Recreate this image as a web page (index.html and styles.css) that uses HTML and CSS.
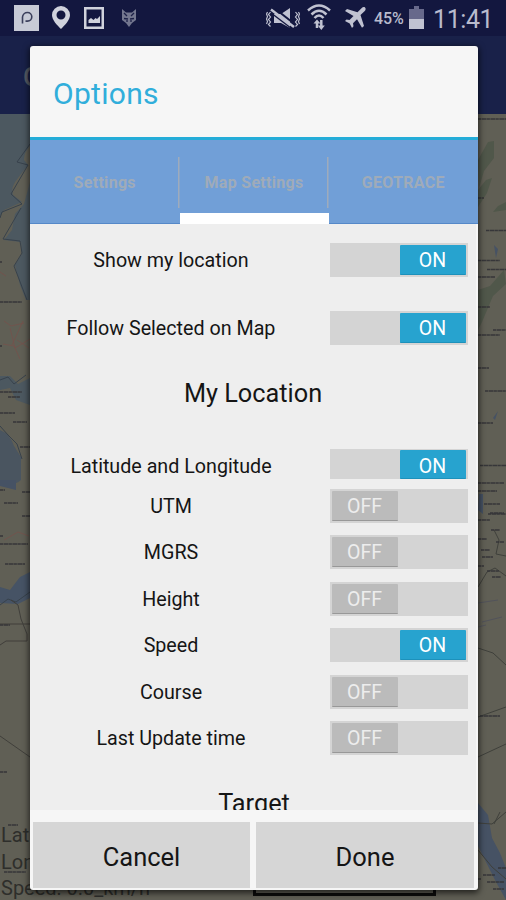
FILE: index.html
```html
<!DOCTYPE html>
<html lang="en">
<head>
<meta charset="utf-8">
<title>Options</title>
<link rel="stylesheet" href="styles.css">
</head>
<body>
<div class="screen">
  <header class="statusbar">
    <div class="status-left">
      <svg class="ic-p" width="25" height="26" viewBox="0 0 25 26"><rect width="25" height="26" fill="#c7cad6"/><path d="M8.500 18.500V12a5 5 0 0 1 5-4.500a4.300 4.300 0 1 1 0 8.600h-2" fill="none" stroke="#3b3f5c" stroke-width="1.600"/></svg>
      <svg class="ic-pin" width="18" height="23" viewBox="0 0 18 23"><path fill-rule="evenodd" d="M9 0a9 9 0 0 1 9 9c0 5-5 10-9 14C5 19 0 14 0 9a9 9 0 0 1 9-9zm0 4.500a4.500 4.500 0 1 0 0 9a4.500 4.500 0 0 0 0-9z" fill="#d0d2dc"/></svg>
      <svg class="ic-img" width="20" height="22" viewBox="0 0 20 22"><rect x="1.250" y="1.250" width="17.500" height="19.500" fill="none" stroke="#d0d2dc" stroke-width="2.500"/><path d="M4.500 16v-3l2.500-2 2.500 2 2-2 1.500 1 3-3v7z" fill="#d0d2dc"/></svg>
      <svg class="ic-fox" width="14" height="18" viewBox="0 0 14 18"><path d="M0 0l4 3.500h6L14 0v11l-4 3-3 4-3-4-4-3z" fill="#74778f"/><path d="M2 4l3 3M12 4l-3 3M2 9.500l4 .5M12 9.500l-4 .5M5 13v-2M9 13v-2" stroke="#1c2047" stroke-width="1.300"/></svg>
    </div>
    <div class="status-right">
      <svg class="ic-mute" width="34" height="21" viewBox="0 0 34 21"><path d="M8 6h7l9-6v20l-9-5H8z" fill="#c0c2d1"/><path d="M7.500-.5l23 18" stroke="#13173f" stroke-width="2"/><path d="M5 1.500l23 17.500" stroke="#c0c2d1" stroke-width="2.400"/><path d="M3.500 3.800l23 17.500" stroke="#13173f" stroke-width="1.300"/><path d="M4.500 4l-2 2.500 2 2.500-2 2.500 2 2.500-2 2.500 2 2M1.500 4l-1 2 1 2.500-1 2.500 1 2.500-1 2.500M29.500 4l2 2.500-2 2.500 2 2.500-2 2.500 2 2.500-2 2M32.500 4l1 2-1 2.500 1 2.500-1 2.500 1 2.500" fill="none" stroke="#c0c2d1" stroke-width="1.200"/></svg>
      <svg class="ic-wifi" width="24" height="26" viewBox="0 0 24 26"><path d="M1 6.500Q12-3.500 23 6.500M4.500 10.500Q12 3 19.500 10.500M7.500 14Q12 9 16.500 14" fill="none" stroke="#c0c2d1" stroke-width="2.500"/><path d="M10 24v-6M14.300 16v6" stroke="#c0c2d1" stroke-width="2.500"/><path d="M6.500 19.500l3.500-4 3.500 4zM10.800 21.500h7L14.300 26z" fill="#c0c2d1"/></svg>
      <svg class="ic-plane" width="21" height="21" viewBox="0 0 21 21"><path d="M20 .5c1.200 1 .6 2.700-.5 3.800L15.500 8l3.500 11-2 1.800-5-8.500-4 4 .5 3L7 21l-2.300-4.500L0 14l1.500-1.500 3 .5 4-4L0 4l2-2 10.500 3.200L16.500 1.200C17.700.1 19.200-.2 20 .5z" fill="#c0c2d1"/></svg>
      <span class="percent">45%</span>
      <svg class="ic-bat" width="15" height="23" viewBox="0 0 15 23"><path d="M5 0h5v3h5v10H0V3h5z" fill="#67698b"/><path d="M0 13h15v10H0z" fill="#c0c2d1"/></svg>
      <span class="clock">11:41</span>
    </div>
  </header>
  <div class="appbar">G</div>
  <main class="map">
    <svg class="map-art" width="506" height="786" viewBox="0 114 506 786">
      <rect x="0" y="114" width="506" height="786" fill="#605f55"/>
      <g fill="#4c5860">
        <path d="M0 114H30V146Q24 152 24 160L28 165 18 178Q10 187 13 195L22 202 4 210 0 216z"/>
        <path d="M30 182L24 204 15 214 12 230 4 240 21 242 22 254 15 265 20 285 26 300H30z"/>
        <path d="M0 376L10 376 18 384 30 378V405L16 400 10 388 0 390z"/>
      </g>
      <path d="M0 430Q10 434 14 446L21 457V480Q15 486 0 484z" fill="#4a5560"/>
      <path d="M0 587L10 590 20 577 30 572V598L18 604 0 603z" fill="#465365"/>
      <g fill="none" stroke="#38424c" stroke-width="1">
        <path d="M30 144L17 162 28 165 11 194 22 204 2 212 0 218M21 208L3 239 20 241 22 253 14 266 27 300M0 380L8 377 14 384 26 375M0 426l8 9 9 9 5 15M0 605l8-6 8 3 14-10"/>
        <path d="M11 600l7 5 3 14 6 15v7H6l-6 4M0 736l30 21M0 624h30" stroke="#403f3b"/>
      </g>
      <g fill="none" stroke="#78504a" stroke-width="1" opacity=".7">
        <path d="M4 321l7 5 13-3M10 328l5 20 15-9M3 344l11 2 6 13M12 345l11-24M0 272l6 4M17 340l12 8M4 540l14-8 11 4"/>
      </g>
      <g fill="#50574a">
        <path d="M478 160L488 142 494 141 494 158 484 171 479 188z"/>
        <path d="M478 190l8-10 6-2-5 15-9 14zM498 206l8-4v8l-13 2zM478 290l12-4 14-16 2 14-13 12-11 26-4 8z"/>
      </g>
      <g fill="#465264">
        <path d="M478 803L488 815 492 838 500 853 506 868V900L496 882 478 846zM479 494h4v20l-5-4zM493 418l5-7-3 9zM494 245l4 4-2 9zM0 480h16v10L0 486z"/>
      </g>
      <g fill="none" stroke="#3f403b" stroke-width="1">
        <path d="M478 648l15 5 13 12M478 717l28-10M478 757l28-13M478 587l9-15 8-4 11 8M500 812l-6 12M478 823l14 1 14-12M478 850l14 17 14 12M494 530l5 10-3 14 10 2"/>
        <path d="M478 603l20-3M482 622l20-5M478 627l8-2" stroke="#52535a"/>
      </g>
      <g fill="none" stroke="#363639" stroke-width="1.700" stroke-dasharray="3 .5 5 .4">
        <path d="M478 119h28M478 198h6M486 230.500h20M478 260.500h22M487 269.500h19M478 277h17M478 307h12M493 330h13M478 335h22M478 368h11M485 391h21M478 423h15M480 465.500h26M478 483h26M478 491h19"/>
        <path d="M484 504h16M488 514h18M490 513h14M478 520h12M491 530h9M496 542h8M478 539h9M481 550h9M482 557h11M478 566h6M487 571h12M492 577h9M480 716h20M498 868h8M483 875h12M487 882h17M493 889h11M478 879h3"/>
        <path d="M0 262h2M0 302h22M0 346h2M0 392h22M8 397h12M0 413h15M13 422h14M20 447h10M0 490h5M4 503h14M22 492h8M22 516h8M0 536h3M0 544h28M5 564h20M0 625h10M0 772h7M8 825h10M4 872h22"/>
      </g>
    </svg>
    <div class="readout"><div>Lat:</div><div>Lon:</div><div>Speed: 0.0_km/h</div></div>
    <div class="scale"></div>
  </main>

  <section class="dialog">
    <h1 class="title">Options</h1>
    <nav class="tabs">
      <div class="tab"><span>Settings</span></div>
      <div class="tab active"><span>Map Settings</span></div>
      <div class="tab"><span>GEOTRACE</span></div>
    </nav>
    <div class="options">
      <div class="row tall"><span class="label">Show my location</span><div class="switch on"><b>ON</b></div></div>
      <div class="row tall"><span class="label">Follow Selected on Map</span><div class="switch on"><b>ON</b></div></div>
      <h2 class="heading">My Location</h2>
      <div class="row first"><span class="label">Latitude and Longitude</span><div class="switch on short"><b>ON</b></div></div>
      <div class="row"><span class="label">UTM</span><div class="switch"><b>OFF</b></div></div>
      <div class="row"><span class="label">MGRS</span><div class="switch"><b>OFF</b></div></div>
      <div class="row"><span class="label">Height</span><div class="switch"><b>OFF</b></div></div>
      <div class="row"><span class="label">Speed</span><div class="switch on"><b>ON</b></div></div>
      <div class="row"><span class="label">Course</span><div class="switch"><b>OFF</b></div></div>
      <div class="row"><span class="label">Last Update time</span><div class="switch"><b>OFF</b></div></div>
      <h2 class="heading target">Target</h2>
    </div>
    <footer class="actions"><button>Cancel</button><button>Done</button></footer>
  </section>
</div>
</body>
</html>
```
FILE: styles.css
```css
* { box-sizing: border-box; }
body { margin: 0; font-family: Roboto, "Liberation Sans", sans-serif; color: #151515; }
.screen { position: relative; width: 506px; height: 900px; overflow: hidden; display: flex; flex-direction: column; background: #605f55; }
.statusbar { flex: none; height: 36px; background: #13173f; display: flex; justify-content: space-between; color: #b9bbcd; }
.status-left, .status-right { display: flex; align-items: flex-start; }
.status-left svg, .status-right svg { flex: none; }
.ic-p { margin: 5px 0 0 14px; }
.ic-pin { margin: 6px 0 0 13px; }
.ic-img { margin: 7px 0 0 14px; }
.ic-fox { margin: 9px 0 0 18px; }
.ic-mute { margin: 8px 7px 0 0; }
.ic-wifi { margin: 4px 14px 0 0; }
.ic-plane { margin: 7px 8px 0 0; }
.percent { width: 31px; margin: 9px 4px 0 0; font-size: 16px; line-height: 20px; font-weight: 500; letter-spacing: -.1px; white-space: nowrap; }
.ic-bat { margin: 6px 9px 0 0; }
.clock { width: 73px; margin-top: 5px; font-size: 25px; line-height: 30px; letter-spacing: -.4px; white-space: nowrap; }
.appbar { flex: none; height: 78px; padding: 26px 0 0 23px; background: #192149; color: #555a64; font-size: 26px; line-height: 30px; font-weight: 500; }
.map { flex: none; position: relative; height: 786px; }
.map-art { display: block; }
.readout { position: absolute; left: 1px; top: 708px; font-size: 20px; line-height: 26.500px; color: #2e2e2b; }
.scale { position: absolute; left: 253px; top: 769px; width: 183px; height: 13px; border: 3px solid #0c0c0b; }

.dialog { position: absolute; left: 30px; top: 46px; width: 448px; height: 844px; background: #f6f6f6; border-radius: 3px; display: flex; flex-direction: column; box-shadow: 0 2px 6px 1px rgba(0,0,0,.65); overflow: hidden; }
.title { flex: none; margin: 0; height: 94px; padding: 1px 23px 0; border-bottom: 3px solid #24acd8; font-size: 30px; line-height: 94px; font-weight: 400; letter-spacing: .3px; color: #31aedb; }
.tabs { flex: none; height: 84px; display: grid; grid-template-columns: 149.500px 149px 149.500px; background: #719fd7; box-shadow: inset 0 -1px #5588c8; }
.tab { display: flex; align-items: center; justify-content: center; height: 84px; padding-top: 1px; font-size: 16px; font-weight: 700; letter-spacing: .3px; color: #9fabb9; background: linear-gradient(#9fabbb, #9fabbb) right 17px / 1.500px 51px no-repeat; }
.tab:last-child { background: none; }
.tab.active { border-bottom: 11px solid #fff; padding-top: 12px; }
.options { flex: none; height: 586px; padding-top: 19px; background: #eee; overflow: hidden; margin-right: 2px; }
.row { display: grid; grid-template-columns: 282px 138px; column-gap: 17.500px; height: 46.500px; align-items: start; }
.row.tall { height: 67.500px; }
.row.first { height: 39.500px; }
.label { text-align: center; font-size: 19.700px; line-height: 36px; white-space: nowrap; }
.switch { display: flex; height: 34px; padding: 2px; background: #d4d4d4; }
.switch b { width: 66px; height: 30px; font-size: 19.500px; line-height: 32px; font-weight: 400; text-align: center; color: #ededed; background: #bbb; border-bottom: 1.500px solid #989898; border-radius: 1px; }
.switch.on { justify-content: flex-end; }
.switch.on b { color: #fff; background: #27a3cf; border-bottom-color: #1d91bb; }
.switch.short { height: 30px; padding: 1px 2px; }
.switch.short b { height: 29px; line-height: 33px; }
.heading { margin: 0; height: 71px; text-align: center; font-size: 25.300px; line-height: 32px; font-weight: 400; }
.target { padding: 20px 0 0 2px; }
.actions { flex: 1; display: grid; grid-template-columns: 217px 218px; column-gap: 6px; padding: 12px 3px 2px; }
.actions button { border: 0; padding: 5px 0 0; background: #d6d6d6; font: 25.500px/1 Roboto, sans-serif; color: #151515; }
```
